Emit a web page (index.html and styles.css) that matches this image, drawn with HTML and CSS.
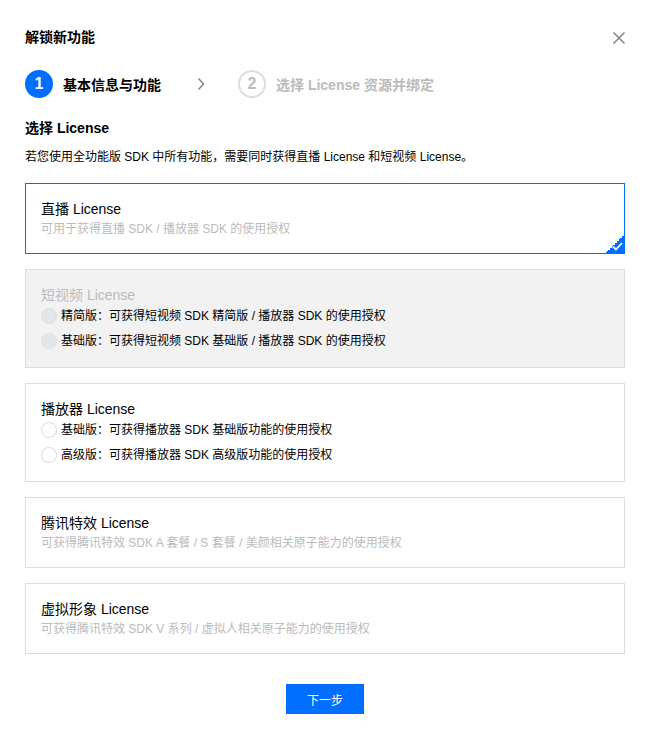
FILE: index.html
```html
<!DOCTYPE html>
<html lang="zh-CN">
<head>
<meta charset="utf-8">
<title>解锁新功能</title>
<link rel="stylesheet" href="styles.css">
</head>
<body>
<div class="dialog">
  <div class="header">
    <h1 class="title">解锁新功能</h1>
    <svg class="close" width="14" height="14" viewBox="0 0 14 14"><path d="M1.5 1.5L12.5 12.5M12.5 1.5L1.5 12.5" stroke="#888" stroke-width="1.6" fill="none"/></svg>
  </div>
  <div class="steps">
    <div class="step active"><span class="num">1</span><span class="label">基本信息与功能</span></div>
    <svg class="arrow" width="10" height="14" viewBox="0 0 10 14"><path d="M2.5 1.5L7.5 7L2.5 12.5" stroke="#888" stroke-width="1.6" fill="none"/></svg>
    <div class="step"><span class="num">2</span><span class="label">选择 License 资源并绑定</span></div>
  </div>
  <h2 class="section">选择 License</h2>
  <p class="desc">若您使用全功能版 SDK 中所有功能，需要同时获得直播 License 和短视频 License。</p>
  <div class="cards">
    <div class="card selected">
      <div class="card-title">直播 License</div>
      <div class="card-sub">可用于获得直播 SDK / 播放器 SDK 的使用授权</div>
      <span class="corner"><svg width="11" height="9" viewBox="0 0 11 9"><path d="M1 4.5L4 7.5L10 1" stroke="#fff" stroke-width="1.8" fill="none"/></svg></span>
    </div>
    <div class="card disabled opts">
      <div class="card-title">短视频 License</div>
      <div class="radios">
        <label class="radio"><span class="dot"></span>精简版：可获得短视频 SDK 精简版 / 播放器 SDK 的使用授权</label>
        <label class="radio"><span class="dot"></span>基础版：可获得短视频 SDK 基础版 / 播放器 SDK 的使用授权</label>
      </div>
    </div>
    <div class="card opts">
      <div class="card-title">播放器 License</div>
      <div class="radios">
        <label class="radio"><span class="dot"></span>基础版：可获得播放器 SDK 基础版功能的使用授权</label>
        <label class="radio"><span class="dot"></span>高级版：可获得播放器 SDK 高级版功能的使用授权</label>
      </div>
    </div>
    <div class="card">
      <div class="card-title">腾讯特效 License</div>
      <div class="card-sub">可获得腾讯特效 SDK A 套餐 / S 套餐 / 美颜相关原子能力的使用授权</div>
    </div>
    <div class="card">
      <div class="card-title">虚拟形象 License</div>
      <div class="card-sub">可获得腾讯特效 SDK V 系列 / 虚拟人相关原子能力的使用授权</div>
    </div>
  </div>
  <div class="footer"><button class="btn">下一步</button></div>
</div>
</body>
</html>
```
FILE: styles.css
```css
* { box-sizing: border-box; }
html, body { margin: 0; padding: 0; background: #fff; }
body {
  font-family: "Liberation Sans", "Noto Sans CJK SC", sans-serif;
  color: #000;
  font-size: 12px;
}
.dialog { width: 650px; padding: 27px 25px 0 25px; }
.header { display: flex; justify-content: space-between; align-items: center; height: 20px; }
.title { margin: 0; font-size: 14px; font-weight: bold; line-height: 20px; height: 20px; color: #000; }
.close { margin-right: -1px; margin-top: 2px; }
.steps { display: flex; align-items: center; height: 28px; margin-top: 23px; }
.step { display: flex; align-items: center; }
.num {
  width: 28px; height: 28px; border-radius: 50%;
  border: 2px solid #ddd; color: #bbb;
  display: flex; align-items: center; justify-content: center;
  font-size: 16px; font-weight: bold;
}
.step.active .num { background: #006eff; border-color: #006eff; color: #fff; }
.label { margin-left: 10px; font-size: 14px; font-weight: bold; color: #bbb; }
.step.active .label { color: #000; }
.arrow { margin: 0 32px 0 35px; }
.section { margin: 20px 0 0; font-size: 14px; font-weight: bold; line-height: 20px; height: 20px; }
.desc { margin: 9px 0 0; font-size: 12px; line-height: 20px; height: 20px; color: #000; }
.cards { margin-top: 16px; display: flex; flex-direction: column; gap: 15px; }
.card { position: relative; border: 1px solid #ddd; padding: 15px 15px 14px; background: #fff; }
.card.opts { padding-bottom: 15px; }
.card.selected { border-color: #006eff; }
.card.disabled { background: #f2f2f2; }
.card-title { font-size: 14px; line-height: 20px; height: 20px; color: #000; }
.card.disabled .card-title { color: #bbb; }
.card-sub { font-size: 12px; line-height: 20px; height: 20px; color: #bbb; }
.radios { display: flex; flex-direction: column; gap: 4px; }
.radio { display: flex; align-items: center; height: 22px; line-height: 22px; font-size: 12px; color: #000; overflow: hidden; }
.radios .radio:first-child { height: 21px; }
.dot {
  flex: none;
  width: 16px; height: 16px; border-radius: 50%;
  border: 1px solid #ddd; background: #fff; margin-right: 4px;
}
.card.disabled .dot { background: #e3e6eb; border-color: #dcdfe4; }
.corner {
  position: absolute; right: 0; bottom: 0; width: 18px; height: 18px;
  background: linear-gradient(135deg, transparent 50%, #006eff 50%);
}
.corner svg { position: absolute; right: 1px; bottom: 2px; }
.footer { display: flex; justify-content: center; margin-top: 30px; }
.btn {
  width: 78px; height: 30px; border: 0; background: #006eff; color: #fff;
  font-family: inherit; font-size: 12px; padding: 0;
}
```
